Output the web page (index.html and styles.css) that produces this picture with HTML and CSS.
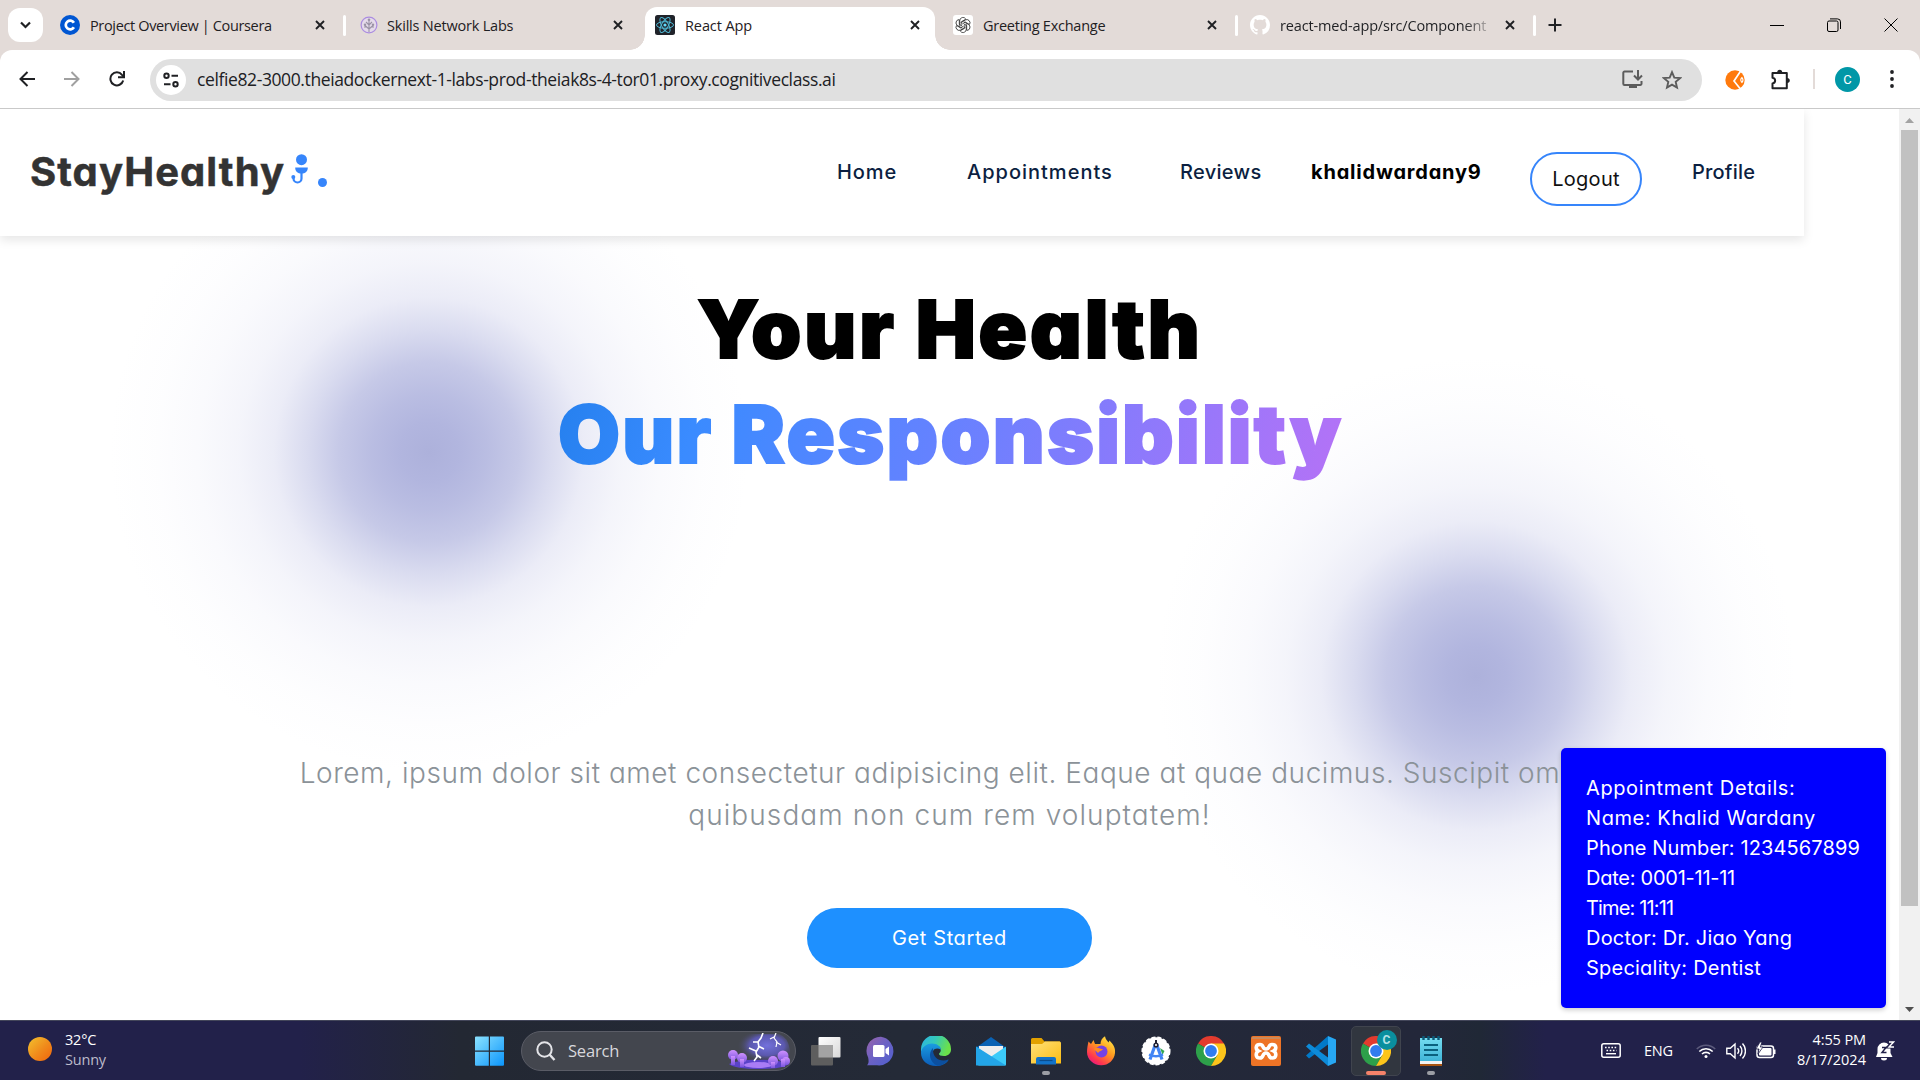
FILE: index.html
```html
<!DOCTYPE html>
<html lang="en">
<head>
<meta charset="utf-8">
<title>React App</title>
<link rel="stylesheet" href="styles.css">
</head>
<body>
<svg class="defs" aria-hidden="true">
  <defs>
    <symbol id="close" viewBox="0 0 10 10"><path d="M1 1l8 8M9 1L1 9" stroke="#1f2023" stroke-width="1.9" fill="none"/></symbol>
    <symbol id="knot" viewBox="0 0 20 20"><path d="M6.800 11V5.500a3.200 3.200 0 0 1 5.900-1.600M8.700 9.800V6.500l4.200-2.400" fill="none" stroke="#333" stroke-width=".8"/></symbol>
    <symbol id="chrome" viewBox="0 0 30 30">
      <path d="M15 15L2 7.5A15 15 0 0 1 28 7.5z" fill="#e33b2e"/>
      <path d="M15 15L2 7.5A15 15 0 0 0 15 30L21.5 18.7z" fill="#2da04a"/>
      <path d="M15 15V7.5H28A15 15 0 0 1 15 30l6.5-11.3z" fill="#fcc51b"/>
      <circle cx="15" cy="15" r="7.5" fill="#fff"/><circle cx="15" cy="15" r="5.9" fill="#317cee"/>
    </symbol>
  </defs>
</svg>

<header class="tabstrip">
  <button class="tab-search"><svg width="11" height="8" viewBox="0 0 11 8"><path d="M1 1.5l4.5 4.5L10 1.5" fill="none" stroke="#202124" stroke-width="2.2"/></svg></button>
  <div class="tab tab-coursera">
    <svg width="20" height="20" viewBox="0 0 20 20"><circle cx="10" cy="10" r="10" fill="#0056d2"/><path d="M13.9 12.3a4.4 4.4 0 1 1 0-4.6" fill="none" stroke="#fff" stroke-width="2.7"/></svg>
    <span class="title">Project Overview | Coursera</span><svg class="x"><use href="#close"/></svg>
  </div>
  <i class="sep"></i>
  <div class="tab tab-skills">
    <svg width="20" height="20" viewBox="0 0 20 20"><circle cx="9" cy="10" r="7.9" fill="#e5dbea" stroke="#ab8ce0" stroke-width="1.2"/><path d="M9 17V5M9 14L5 10.500M9 14l4-3.500M9 10L6 7M9 10l3-3M4 12h3M11 12h3" stroke="#9b93a6" stroke-width="1.1" fill="none"/><circle cx="9" cy="4.800" r="1.300" fill="#9b93a6"/><circle cx="5" cy="9.800" r="1.200" fill="#9b93a6"/><circle cx="13" cy="9.800" r="1.200" fill="#9b93a6"/></svg>
    <span class="title">Skills Network Labs</span><svg class="x"><use href="#close"/></svg>
  </div>
  <div class="tab tab-react">
    <svg width="20" height="20" viewBox="0 0 20 20"><rect width="20" height="20" rx="2.500" fill="#20232a"/><g fill="none" stroke="#4fb8d4" stroke-width="1"><ellipse cx="10" cy="10" rx="8.500" ry="3.300"/><ellipse cx="10" cy="10" rx="8.500" ry="3.300" transform="rotate(60 10 10)"/><ellipse cx="10" cy="10" rx="8.500" ry="3.300" transform="rotate(120 10 10)"/></g><circle cx="10" cy="10" r="1.600" fill="#61dafb"/></svg>
    <span class="title">React App</span><svg class="x"><use href="#close"/></svg>
  </div>
  <div class="tab tab-chat">
    <svg width="20" height="20" viewBox="0 0 20 20"><rect width="20" height="20" rx="3" fill="#fff"/><use href="#knot" width="20" height="20"/><use href="#knot" width="20" height="20" transform="rotate(60 10 10)"/><use href="#knot" width="20" height="20" transform="rotate(120 10 10)"/><use href="#knot" width="20" height="20" transform="rotate(180 10 10)"/><use href="#knot" width="20" height="20" transform="rotate(240 10 10)"/><use href="#knot" width="20" height="20" transform="rotate(300 10 10)"/></svg>
    <span class="title">Greeting Exchange</span><svg class="x"><use href="#close"/></svg>
  </div>
  <i class="sep"></i>
  <div class="tab tab-github">
    <svg width="20" height="20" viewBox="0 0 16 16"><path fill="#fff" d="M8 0C3.580 0 0 3.580 0 8c0 3.540 2.290 6.530 5.470 7.590.4.070.55-.17.55-.38 0-.19-.010-.82-.010-1.490-2.010.37-2.530-.49-2.690-.94-.09-.23-.48-.94-.82-1.130-.28-.15-.68-.52-.010-.53.63-.010 1.080.58 1.230.82.72 1.210 1.870.87 2.330.66.070-.52.280-.87.510-1.070-1.780-.2-3.640-.89-3.640-3.950 0-.87.310-1.590.82-2.150-.08-.2-.36-1.020.08-2.120 0 0 .67-.21 2.200.82.64-.18 1.320-.27 2-.27s1.360.09 2 .27c1.530-1.040 2.200-.82 2.200-.82.44 1.100.16 1.920.08 2.120.51.560.82 1.270.82 2.150 0 3.070-1.870 3.750-3.650 3.950.290.250.540.730.540 1.480 0 1.070-.010 1.930-.010 2.200 0 .21.150.46.550.38A8.010 8.010 0 0 0 16 8c0-4.420-3.580-8-8-8z"/></svg>
    <span class="title">react-med-app/src/Component</span><svg class="x"><use href="#close"/></svg>
  </div>
  <i class="sep"></i>
  <svg class="plus" width="14" height="14" viewBox="0 0 14 14"><path d="M7 .5v13M.5 7h13" stroke="#202124" stroke-width="2"/></svg>
  <div class="win">
    <svg width="14" height="14" viewBox="0 0 14 14"><path d="M0 7.500h14" stroke="#000"/></svg>
    <svg width="14" height="14" viewBox="0 0 14 14" fill="none" stroke="#000"><rect x=".5" y="3" width="10.500" height="10.500" rx="1.500"/><path d="M3 .9h7.500a3 3 0 0 1 3 3V11"/></svg>
    <svg width="14" height="14" viewBox="0 0 14 14"><path d="M.5.5l13 13M13.500.5l-13 13" stroke="#000"/></svg>
  </div>
</header>

<div class="toolbar-wrap">
<div class="toolbar">
  <div class="nav-buttons">
    <svg width="16" height="16" viewBox="0 0 16 16" fill="none" stroke="#1f2023" stroke-width="2"><path d="M16 8H1.800M8.500 1L1.500 8l7 7"/></svg>
    <svg width="16" height="16" viewBox="0 0 16 16" fill="none" stroke="#a0a0a0" stroke-width="2"><path d="M0 8h14.200M7.500 1l7 7-7 7"/></svg>
    <svg width="16" height="16" viewBox="0 0 16 16" fill="none" stroke="#1f2023" stroke-width="2"><path d="M14.200 9.500A6.500 6.500 0 1 1 13 3.800l1.800 2"/><path d="M15 0v6.300H9"/></svg>
  </div>
  <div class="omnibox">
    <span class="site-info"><svg width="16" height="16" viewBox="0 0 16 16" fill="none" stroke="#202124" stroke-width="2"><circle cx="3.500" cy="3.700" r="2.200"/><path d="M8.500 3.700H15M1 12.300h6.500"/><circle cx="12.500" cy="12.300" r="2.200"/></svg></span>
    <span class="url">celfie82-3000.theiadockernext-1-labs-prod-theiak8s-4-tor01.proxy.cognitiveclass.ai</span>
    <svg class="install" width="21" height="19" viewBox="0 0 21 19"><path d="M11 1.500H2.500a1.200 1.200 0 0 0-1.200 1.200v11a1.200 1.200 0 0 0 1.200 1.200h15.800a1.200 1.200 0 0 0 1.200-1.200V11" fill="none" stroke="#5c5c5c" stroke-width="2"/><path d="M16 0v9M12 5.500l4 4 4-4" fill="none" stroke="#5c5c5c" stroke-width="2"/><path d="M7 15h8v3H7z" fill="#5c5c5c"/></svg>
    <svg width="20" height="20" viewBox="0 0 20 20"><path d="M10 2.200l2.300 5.400 5.800.5-4.400 3.800 1.300 5.700-5-3-5 3 1.300-5.700L1.900 8.100l5.800-.5z" fill="none" stroke="#5c5c5c" stroke-width="1.900"/></svg>
  </div>
  <svg class="ext" width="20" height="20" viewBox="0 0 20 20"><circle cx="10" cy="10" r="9.700" fill="#ff7a0d"/><path d="M16 .5L9 11l6 7.500" fill="none" stroke="#fff" stroke-width="1.700"/><path d="M17 7.500q-2.500 2.500 0 5q2-2.500 0-5z" fill="none" stroke="#fff" stroke-width="1.100"/></svg>
  <svg class="puzzle" width="21" height="21" viewBox="0 0 21 21"><path d="M2.500 4h14.300v15.200H2.500v-4.700c3.500-.5 3.500-5.300 0-5.800z" fill="none" stroke="#202124" stroke-width="2" stroke-linejoin="round"/><path d="M7.200 3.500a2.500 2.800 0 0 1 5 0zM17 9a2.800 2.500 0 0 1 0 5z" fill="#202124"/></svg>
  <i class="tool-sep"></i>
  <span class="avatar">C</span>
  <svg class="dots" width="4" height="18" viewBox="0 0 4 18" fill="#202124"><circle cx="2" cy="2" r="1.900"/><circle cx="2" cy="9" r="1.900"/><circle cx="2" cy="16" r="1.900"/></svg>
</div>
</div>

<main class="viewport">
  <div class="page">
    <nav class="navbar">
      <a class="logo">StayHealthy</a>
      <svg class="logo-mark" width="18" height="30" viewBox="0 0 18 30"><circle cx="10.500" cy="5.700" r="5.500" fill="#3685fb"/><path d="M4.200 13.500h12.600c0 4-2.600 6-6.300 6s-6.300-2-6.300-6z" fill="#3685fb"/><path d="M10.500 18v6.500a4 4 0 0 1-8 0V23" fill="none" stroke="#3685fb" stroke-width="2.200"/><circle cx="2.300" cy="23" r="2" fill="#3685fb"/></svg>
      <i class="logo-dot"></i>
      <ul class="links">
        <li class="home">Home</li>
        <li class="appts">Appointments</li>
        <li class="reviews">Reviews</li>
        <li class="user">khalidwardany9</li>
        <li class="logout">Logout</li>
        <li class="profile">Profile</li>
      </ul>
    </nav>
    <section class="hero">
      <h1><span class="h-a">Your Health</span><span class="h-b">Our Responsibility</span></h1>
      <p><span class="p-a">Lorem, ipsum dolor sit amet consectetur adipisicing elit. Eaque at quae ducimus. Suscipit omnis</span><span class="p-b">quibusdam non cum rem voluptatem!</span></p>
      <button class="cta">Get Started</button>
    </section>
    <aside class="details">
      <div>Appointment Details:</div>
      <div>Name: Khalid Wardany</div>
      <div>Phone Number: 1234567899</div>
      <div>Date: 0001-11-11</div>
      <div>Time: 11:11</div>
      <div>Doctor: Dr. Jiao Yang</div>
      <div>Speciality: Dentist</div>
    </aside>
  </div>
  <div class="scrollbar">
    <svg width="21" height="21" viewBox="0 0 21 21"><path d="M6 14l4.500-5 4.500 5z" fill="#a3a3a3"/></svg>
    <div class="thumb"></div>
    <svg class="down" width="21" height="21" viewBox="0 0 21 21"><path d="M6 8l4.500 5L15 8z" fill="#505050"/></svg>
  </div>
</main>

<footer class="taskbar">
  <div class="weather">
    <i class="sun"></i>
    <div class="weather-text"><span>32°C</span><span class="dim">Sunny</span></div>
  </div>
  <svg class="start" width="29" height="30" viewBox="0 0 29 30"><defs><linearGradient id="w" x2="1" y2="1"><stop stop-color="#8be2ff"/><stop offset="1" stop-color="#0b95fb"/></linearGradient></defs><path d="M1 .5h12.800v14H0V1.500a1 1 0 0 1 1-1zM15 .5h13a1 1 0 0 1 1 1v13H15zM0 15.700h13.800v14H1a1 1 0 0 1-1-1zM15 15.700h14v13a1 1 0 0 1-1 1H15z" fill="url(#w)"/></svg>
  <div class="search">
    <svg width="20" height="20" viewBox="0 0 20 20" fill="none" stroke="#e4e4e8" stroke-width="2"><circle cx="8.500" cy="8.500" r="7.200"/><path d="M13.500 13.500l5 5.500" stroke-width="2.400"/></svg>
    <span>Search</span>
    <svg class="storm" width="62" height="36" viewBox="0 0 62 36">
      <defs><radialGradient id="s" cx=".6" cy=".35"><stop stop-color="#7371dc"/><stop offset=".6" stop-color="#5b58ae"/><stop offset="1" stop-color="#474958" stop-opacity="0"/></radialGradient><linearGradient id="t" x2="0" y2="1"><stop stop-color="#cf91ff"/><stop offset="1" stop-color="#7a55dd"/></linearGradient></defs>
      <path d="M5 1h46q9 3 11 16T54 34H8Q3 30 4 20z" fill="url(#s)"/>
      <path d="M1 31q14-5 30-4 16-1 30 4-6 5-30 5T1 31z" fill="#5a43c8"/><ellipse cx="30" cy="32" rx="14" ry="3" fill="#a97cf5"/>
      <path d="M35 0l-2 5-3 4 1 5-3 5 1 5-3 4M31 9l-6 0M30 13l6 3M28 18l-7-3M29 22l4 3" fill="none" stroke="#fff" stroke-width="1.600"/><path d="M48 0l-2 5 3 4-1 5M48 9l5 3M46 4l-4 2" fill="none" stroke="#fff" stroke-width="1.200"/>
      <g fill="url(#t)"><circle cx="5" cy="22" r="5"/><circle cx="14" cy="25" r="5"/><rect x="3" y="23" width="4" height="9"/><rect x="12" y="26" width="4" height="8"/><circle cx="45" cy="28" r="5"/><circle cx="55" cy="23" r="5.500"/><circle cx="58" cy="28" r="4"/><rect x="43" y="29" width="4" height="6"/><rect x="53" y="26" width="4" height="8"/></g>
    </svg>
  </div>
  <div class="apps">
    <span class="app"><svg width="30" height="30" viewBox="0 0 30 30"><defs><linearGradient id="tv" x2="1" y2="1"><stop stop-color="#fff"/><stop offset="1" stop-color="#d8d8d8"/></linearGradient></defs><rect x="7.500" y="1" width="22" height="20.500" rx="1" fill="url(#tv)"/><rect y="9" width="22" height="20.500" rx="1" fill="#5e5e5e"/><rect x="7.500" y="9" width="14.500" height="12.500" fill="#a3a3a3"/></svg></span>
    <span class="app"><svg width="30" height="30" viewBox="0 0 30 30"><defs><linearGradient id="tm" x2="1" y2="1"><stop stop-color="#9a63a8"/><stop offset=".45" stop-color="#6e62c4"/><stop offset="1" stop-color="#4d5fd0"/></linearGradient></defs><path d="M15 .8A14.200 14.200 0 1 1 11 29.300H1c1.500-1.500 2-3 1.200-7.500A14.200 14.200 0 0 1 15 .8z" fill="url(#tm)"/><rect x="7" y="9" width="11.500" height="12" rx="1.500" fill="#fff"/><path d="M19.500 13l3.500-2.500v9L19.500 17z" fill="#fff"/></svg></span>
    <span class="app"><svg width="30" height="30" viewBox="0 0 30 30"><defs><linearGradient id="e1" x2="1" y2=".3"><stop stop-color="#2bb3e6"/><stop offset=".5" stop-color="#34c8ba"/><stop offset="1" stop-color="#6be14a"/></linearGradient><linearGradient id="e2" x2="0" y2="1"><stop stop-color="#1a9ce0"/><stop offset="1" stop-color="#0b5cb8"/></linearGradient></defs><path d="M0 13A15 14.500 0 0 1 30 13.500c0 4-3 6.500-7 6.500-5 0-6-2-4-3.500 2-2.500 0-7.500-6-7.500C7 9 2 11 0 17z" fill="url(#e1)"/><path d="M0 17c0-5 5-9.500 11-9.500 5 0 9 3 9 6-6-3-9 1-8.500 5 .5 5 6 8.500 13 6.500l3-1C25 28 20 30 15 30 6 30 0 24 0 17z" fill="url(#e2)"/><path d="M12 12c-5 5-4 14 4.500 17.800 5 0 9-3 11.300-6.500-8 3.500-16.800-1-15.800-11.300z" fill="#0c4f9e"/></svg></span>
    <span class="app"><svg width="30" height="30" viewBox="0 0 30 30"><path d="M1 11L15 1l14 10v3H1z" fill="#0a62b4"/><path d="M3 10h24v8l-12 4-12-4z" fill="#eee"/><path d="M0 10.500l15 11-15 8z" fill="#1b98e0"/><path d="M30 10.500L2 29.500h27a1 1 0 0 0 1-1z" fill="#3ccbf9"/><path d="M0 10.500l15 9.500 15 9.500H1a1 1 0 0 1-1-1z" fill="#23a5e8"/></svg></span>
    <span class="app"><svg width="30" height="30" viewBox="0 0 30 30"><defs><linearGradient id="fo" x2="1" y2="1"><stop stop-color="#ffe17a"/><stop offset="1" stop-color="#fbbd12"/></linearGradient></defs><path d="M0 3.500a1.500 1.500 0 0 1 1.500-1.500h9l3 3.500H29V10H0z" fill="#e2a100"/><path d="M0 8h11l3-2.500h14.500A1.500 1.500 0 0 1 30 7v20.500H0z" fill="url(#fo)"/><path d="M5 28.500V23a2 2 0 0 1 2-2h16a2 2 0 0 1 2 2v5.500z" fill="#1273c8"/><path d="M8.500 24.500h13" stroke="#0b4d8c" stroke-width="1.200"/></svg><i class="run"></i></span>
    <span class="app"><svg width="30" height="30" viewBox="0 0 30 30"><defs><linearGradient id="ff" x1=".9" x2=".2" y2="1"><stop stop-color="#fff04a"/><stop offset=".45" stop-color="#ff9a1f"/><stop offset=".8" stop-color="#ff3650"/><stop offset="1" stop-color="#e31587"/></linearGradient></defs><path d="M2.500 5.500L5 8l2.500-4L9 8h5.500c0-3 1.500-6 4.500-7.700.5 3.200 2 4 3.500 6.200l1-2C28 9 29.500 12.500 29 17c-.8 7.500-7 12.500-14 12.300C7.500 29 1 23.500 1 16c0-4 .8-7 1.500-10.500z" fill="url(#ff)"/><circle cx="15.500" cy="15.500" r="6" fill="#7542e5"/><path d="M8 13c3-3 6 0 9 0-1 2-4 2-5 4z" fill="#ff8a20"/></svg></span>
    <span class="app"><svg width="30" height="30" viewBox="0 0 30 30"><circle cx="15" cy="15" r="13.800" fill="#fff" stroke="#fff" stroke-width="1.500" stroke-dasharray="4 2"/><path d="M19 12l4.500 3-2 4z" fill="#34a853"/><path d="M14.500 8L9 23.500M15.500 8L21 23.500" stroke="#4285f4" stroke-width="3.200"/><path d="M8 18.500q7 3.500 14 0" fill="none" stroke="#4285f4" stroke-width="2.500"/><circle cx="15" cy="9" r="1.800" fill="#fff" stroke="#223" stroke-width="1.500"/><path d="M15 4v3" stroke="#223" stroke-width="2"/></svg></span>
    <span class="app"><svg width="30" height="30"><use href="#chrome"/></svg></span>
    <span class="app"><svg width="30" height="30" viewBox="0 0 30 30"><rect width="30" height="30" rx="2" fill="#ee7426"/><path d="M1 1h28v2H1z" fill="#c98a5c"/><path d="M9 8.500c4 0 2 4.500 6 4.500s2-4.500 6-4.500c5 0 4.500 5 1.500 6.500 3 1.500 3.500 7-1.500 7-4 0-2-5-6-5s-2 5-6 5c-5 0-4.500-5.500-1.500-7-3-1.500-3.500-6.500 1.500-6.500z" fill="none" stroke="#fff" stroke-width="3.600"/></svg></span>
    <span class="app"><svg width="30" height="30" viewBox="0 0 30 30"><path d="M22 0v8.500L3 22.500 0 19.500z" fill="#0179c8"/><path d="M0 10.500l3-3L22 21.500V30z" fill="#0d8bd9"/><path d="M22 0l8 3.500v23L22 30z" fill="#27a7f3"/></svg></span>
    <span class="app active"><svg width="30" height="30"><use href="#chrome"/></svg><b class="badge">C</b><i class="run hot"></i></span>
    <span class="app"><svg width="30" height="30" viewBox="0 0 30 30"><defs><linearGradient id="np" x2="0" y2="1"><stop stop-color="#74dcf0"/><stop offset="1" stop-color="#40b5d8"/></linearGradient></defs><path d="M4 26h22v4H4z" fill="#a85310"/><path d="M4 24h22v4H4z" fill="#f2f2f2"/><path d="M4 2h22v23H4z" fill="url(#np)"/><path d="M8 9h14M8 14h14M8 19h14" stroke="#0b617e" stroke-width="1.800"/><path d="M7.500 0v4M12.500 0v4M17.500 0v4M22.500 0v4" stroke="#0b5a78" stroke-width="2.400"/></svg><i class="run"></i></span>
  </div>
  <div class="tray">
    <svg class="kbd" width="20" height="15" viewBox="0 0 20 15"><rect x=".8" y=".8" width="18.400" height="13.400" rx="2" fill="none" stroke="#fff" stroke-width="1.500"/><path d="M4 4.500h12.500M5.500 7.500h10" stroke="#fff" stroke-width="1.600" stroke-dasharray="1.600 1.600"/><path d="M5 10.700h10" stroke="#fff" stroke-width="1.400"/></svg>
    <span class="lang">ENG</span>
    <svg class="wifi" width="20" height="16" viewBox="0 0 20 16" fill="none" stroke="#fff" stroke-width="1.600"><path d="M.8 6a13 13 0 0 1 18.400 0" stroke="#5c5b7c"/><path d="M3.300 8.500a9.500 9.500 0 0 1 13.400 0M6 11a5.800 5.800 0 0 1 8 0"/><circle cx="10" cy="13.500" r="1.500" fill="#fff" stroke="none"/></svg>
    <svg class="vol" width="20" height="18" viewBox="0 0 20 18" fill="none" stroke="#fff" stroke-width="1.400"><path d="M.8 6.300h3.500L9 2v14l-4.700-4.300H.8z"/><path d="M11.500 6.300a4 4 0 0 1 0 5.400M14 4a7.500 7.500 0 0 1 0 10M16.500 1.500a11 11 0 0 1 0 15"/></svg>
    <svg class="bat" width="20" height="17" viewBox="0 0 20 17"><rect x="1" y="4" width="16.500" height="11.500" rx="2.500" fill="none" stroke="#fff" stroke-width="1.500"/><rect x="3" y="6" width="12.500" height="7.500" rx="1" fill="#fff"/><path d="M18.500 7.500v4.500" stroke="#fff" stroke-width="2"/><path d="M4 0L0 7h3l-1 5 5-7H4.300L6 0z" fill="#fff" stroke="#22214a" stroke-width=".8"/></svg>
    <div class="clock"><span class="time">4:55 PM</span><span class="date">8/17/2024</span></div>
    <svg class="bell" width="19" height="20" viewBox="0 0 19 20"><path d="M1.500 12V8a6.500 6.500 0 0 1 13 0v4l2 4H0z" fill="#fff"/><path d="M5 17h6a3 2.500 0 0 1-6 0z" fill="#fff"/><path d="M6 6.500h4l-4 5h4.500" fill="none" stroke="#22214a" stroke-width="1.500"/><path d="M12 1h5l-5 5h5" fill="none" stroke="#22214a" stroke-width="3"/><path d="M13 1h4.500l-4.500 5h5" fill="none" stroke="#fff" stroke-width="1.400"/></svg>
  </div>
</footer>
</body>
</html>
```

FILE: styles.css
```css
* { box-sizing: border-box; }
body { margin: 0; width: 1920px; height: 1080px; overflow: hidden; display: flex; flex-direction: column; background: #fff; font-family: "Open Sans", "Noto Sans", sans-serif; }
svg { display: block; flex: none; }
button { border: 0; padding: 0; font: inherit; }
.defs { width: 0; height: 0; position: absolute; }

/* tab strip */
.tabstrip { height: 50px; flex: none; background: #e3dbd8; display: flex; align-items: flex-start; padding-left: 8px; }
.tab-search { width: 35px; height: 34px; margin-top: 8px; border-radius: 12px; background: #fff; display: flex; align-items: center; justify-content: center; }
.tab { display: flex; align-items: center; height: 36px; margin-top: 7px; font-size: 14.500px; color: #1f2023; }
.tab .title { margin-left: 10px; flex: 1; white-space: nowrap; overflow: hidden; line-height: 22px; letter-spacing: -0.25px; padding-top: 1px; }
.tab .x { width: 10px; height: 10px; margin-left: 8px; }
.tab-coursera { width: 265px; margin-left: 17px; margin-right: 18px; }
.tab-coursera .title { letter-spacing: -0.35px; }
.sep { width: 3px; height: 21px; margin-top: 15px; border-radius: 2px; background: #fff; flex: none; }
.tab-skills { width: 263px; margin-left: 14px; margin-right: 22px; }
.tab-skills .title { margin-left: 7px; letter-spacing: -.2px; }
.tab-react { width: 290px; height: 43px; padding: 0 15px 7px 10px; background: #fff; border-radius: 12px 12px 0 0; position: relative; }
.tab-react .title { letter-spacing: -.1px; }
.tab-react::before, .tab-react::after { content: ""; position: absolute; bottom: 0; width: 15px; height: 15px; }
.tab-react::before { left: -15px; background: radial-gradient(circle at 0 0, transparent 14.5px, #fff 15px); }
.tab-react::after { right: -15px; background: radial-gradient(circle at 100% 0, transparent 14.5px, #fff 15px); }
.tab-chat { width: 264px; margin-left: 18px; margin-right: 18px; }
.tab-github { width: 265px; margin-left: 12px; margin-right: 18px; }
.tab-github .title { -webkit-mask-image: linear-gradient(90deg, #000 88%, rgba(0,0,0,.2) 100%); mask-image: linear-gradient(90deg, #000 88%, rgba(0,0,0,.2) 100%); letter-spacing: -.15px; margin-right: 8px; }
.plus { margin: 18px 0 0 12px; }
.win { margin: 18px 22px 0 auto; display: flex; gap: 43px; }

/* toolbar */
.toolbar-wrap { flex: none; background: #e3dbd8; }
.toolbar { height: 59px; background: #fff; border-radius: 12px 12px 0 0; border-bottom: 1px solid #c9c9c9; display: flex; align-items: center; }
.nav-buttons { display: flex; gap: 29px; padding-left: 19px; width: 150px; }
.omnibox { width: 1552px; height: 42px; margin-top: 1px; border-radius: 21px; background: #e0e0e0; display: flex; align-items: center; padding-left: 6px; padding-right: 20px; }
.site-info { width: 30px; height: 30px; border-radius: 50%; background: #fff; display: flex; align-items: center; justify-content: center; }
.url { flex: 1; margin-left: 11px; font-size: 17.500px; letter-spacing: -0.39px; line-height: 24px; margin-top: -1px; color: #202124; }
.install { margin-right: 19px; }
.ext { margin-left: 23px; margin-top: 2px; }
.puzzle { margin-left: 25px; }
.tool-sep { width: 2px; height: 20px; background: #e3dbd8; margin-left: 22px; }
.avatar { width: 25px; height: 25px; border-radius: 50%; margin-left: 20px; background: #0097a7; color: #fff; font: 13px/25px "Roboto", sans-serif; text-align: center; }
.dots { margin-left: 30px; }

/* page */
.viewport { height: 911px; flex: none; display: flex; font-family: "Inter", sans-serif; font-feature-settings: "cv11"; }
.page { width: 1899px; position: relative; overflow: hidden;
  background:
    radial-gradient(circle 330px at 429px 343px, #adb1db 0, rgba(176,180,222,.98) 30px, rgba(178,182,223,.9) 58px, rgba(178,182,223,.74) 90px, rgba(180,184,224,.5) 122px, rgba(184,187,226,.28) 155px, rgba(190,193,229,.17) 190px, rgba(195,198,232,.09) 230px, rgba(200,203,234,.03) 275px, rgba(205,208,236,0) 320px),
    radial-gradient(circle 330px at 1476px 567px, #adb1db 0, rgba(176,180,222,.98) 30px, rgba(178,182,223,.9) 58px, rgba(178,182,223,.74) 90px, rgba(180,184,224,.5) 122px, rgba(184,187,226,.28) 155px, rgba(190,193,229,.17) 190px, rgba(195,198,232,.09) 230px, rgba(200,203,234,.03) 275px, rgba(205,208,236,0) 320px),
    #fff; }
.navbar { width: 1804px; height: 127px; background: #fff; box-shadow: 0 4px 10px rgba(0,0,0,.1); display: flex; align-items: flex-start; padding-left: 30px; position: relative; }
.logo { margin-top: 33px; width: 261px; font-size: 40px; line-height: 60px; font-weight: 700; color: #333; letter-spacing: 1.080px; -webkit-text-stroke: .5px #333; }
.logo-mark { margin-top: 45px; flex: none; }
.logo-dot { width: 9px; height: 9px; flex: none; border-radius: 50%; background: #3685fb; margin: 69px 0 0 9px; }
.links { list-style: none; margin: 48px 0 0 auto; padding: 0 49px 0 0; display: flex; align-items: flex-start; font-size: 20px; line-height: 30px; color: #0c1f41; white-space: nowrap; font-weight: 450; }
.home { width: 130px; letter-spacing: .9px; }
.appts { width: 213px; letter-spacing: 1px; }
.reviews { width: 131px; letter-spacing: .3px; }
.user { width: 219px; font-weight: 700; color: #000; letter-spacing: .8px; }
.logout { width: 112px; height: 54px; margin: -5px 50px 0 0; border: 2px solid #3685fb; border-radius: 27px; padding: 10px 0; text-align: center; color: #111; font-weight: 400; letter-spacing: .3px; }
.profile { width: 63px; letter-spacing: .2px; }

.hero { padding-top: 40px; display: flex; flex-direction: column; align-items: center; }
h1 { margin: 0; display: flex; flex-direction: column; align-items: center; font-size: 80px; line-height: 105px; font-weight: 900; white-space: nowrap; }
.h-a { letter-spacing: 2.950px; margin-right: -1px; -webkit-text-stroke: 2px #000; }
.h-b { letter-spacing: 2.250px; margin-right: -2px; -webkit-text-stroke: 2px transparent; background: linear-gradient(105deg, #2580ee 0, #3a8bff 18%, #6482ff 48%, #9478fb 78%, #b572f6 100%); -webkit-background-clip: text; background-clip: text; color: transparent; }
.hero p { margin: 266px 0 0; display: flex; flex-direction: column; align-items: center; font-size: 28px; line-height: 42px; font-weight: 300; color: #8b9298; white-space: nowrap; }
.p-a { letter-spacing: .54px; }
.p-b { letter-spacing: 1.080px; }
.cta { margin-top: 72px; width: 285px; height: 60px; border-radius: 30px; background: #1e90ff; color: #fff; font-size: 20px; letter-spacing: .6px; font-feature-settings: inherit; }

.details { position: absolute; left: 1561px; top: 639px; width: 325px; height: 260px; padding: 25px; border-radius: 5px; background: #00f; color: #fff; font-size: 20px; line-height: 30px; white-space: nowrap; box-shadow: 0 2px 5px rgba(0,0,0,.2); letter-spacing: .6px; }
.details div:nth-child(2) { letter-spacing: .58px; }
.details div:nth-child(3) { letter-spacing: .11px; }
.details div:nth-child(4) { letter-spacing: -.25px; }
.details div:nth-child(5) { letter-spacing: -.85px; }
.details div:nth-child(6), .details div:nth-child(7) { letter-spacing: .22px; }

.scrollbar { width: 21px; background: #f1f1f1; display: flex; flex-direction: column; align-items: center; }
.thumb { width: 17px; height: 776px; background: #c1c1c1; }
.down { margin-top: auto; }

/* taskbar */
.taskbar { height: 60px; flex: none; border-top: 1px solid #43465a; display: flex; align-items: center; color: #fff; background: linear-gradient(90deg, #22214a 0, #22214a 300px, #232833 460px, #242a37 900px, #23273a 1420px, #202836 1480px, #22214a 1545px); }
.weather { width: 475px; padding-left: 28px; display: flex; align-items: center; gap: 13px; font-size: 14.500px; line-height: 20px; letter-spacing: -.2px; }
.sun { width: 24px; height: 24px; border-radius: 50%; background: linear-gradient(135deg, #f2c22e, #f08a1b 55%, #f0640c); margin-top: -3px; }
.weather-text, .clock { display: flex; flex-direction: column; margin-top: -2px; }
.dim { color: #bdbccb; }
.search { width: 275px; height: 40px; margin-left: 17px; border: 1px solid #5a5c66; border-radius: 20px; background: #43464e; display: flex; align-items: center; padding: 0 5px 0 14px; font-size: 16.500px; color: #d8d8dc; }
.search span { margin-left: 12px; letter-spacing: -.2px; flex: 1; }
.apps { display: flex; margin-left: 2px; }
.app { width: 50px; height: 50px; margin: 0 2.500px; display: flex; align-items: center; justify-content: center; position: relative; border-radius: 5px; }
.active { background: #31363f; border: 1px solid #40444e; }
.run { position: absolute; bottom: 1px; left: 21px; width: 8px; height: 4px; border-radius: 2px; background: #9c9ea5; }
.hot { width: 20px; left: 14px; bottom: 0; background: #f5826a; }
.badge { position: absolute; left: 25px; top: 3px; width: 20px; height: 20px; border-radius: 50%; background: #0a8f9e; color: #b5e2e6; font: bold 12px/20px "Roboto", sans-serif; text-align: center; }
.tray { margin-left: auto; display: flex; align-items: center; padding-right: 25px; font-size: 14.500px; line-height: 20px; }
.lang { width: 29px; margin: 0 22px 0 23px; letter-spacing: -.2px; }
.wifi { margin-left: 1px; }
.vol { margin-left: 10px; }
.bat { margin-left: 10px; }
.clock { width: 90px; align-items: flex-end; }
.time { letter-spacing: -.1px; }
.date { letter-spacing: .05px; }
.bell { margin-left: 10px; }
```
